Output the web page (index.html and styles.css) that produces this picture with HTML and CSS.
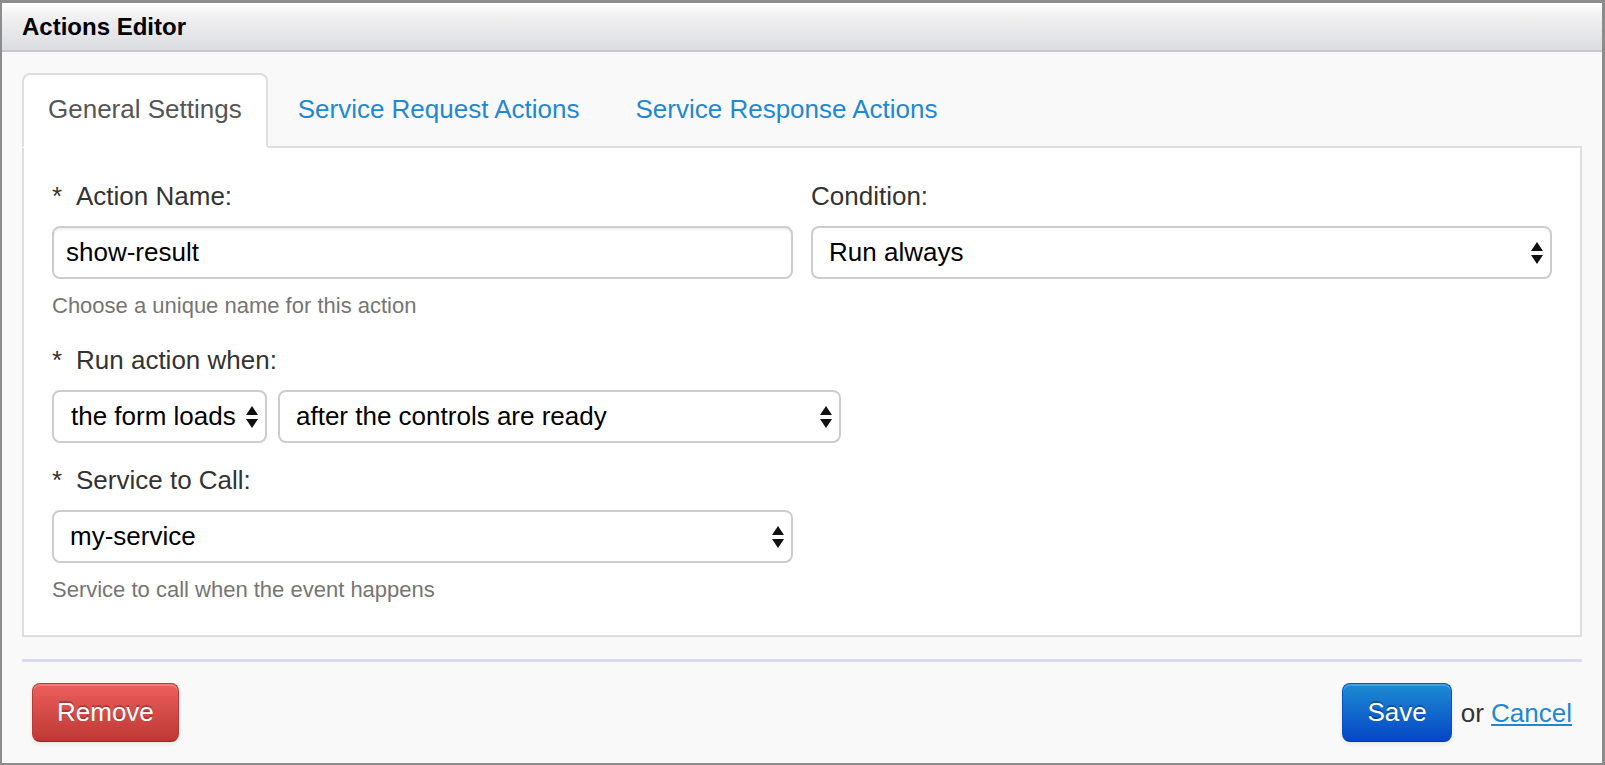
FILE: index.html
```html
<!DOCTYPE html>
<html lang="en">
<head>
<meta charset="utf-8">
<title>Actions Editor</title>
<link rel="stylesheet" href="styles.css">
</head>
<body>
<div class="window">
  <header class="titlebar">
    <h1 class="title">Actions Editor</h1>
  </header>
  <main class="content">
    <nav class="tabs">
      <a class="tab active">General Settings</a>
      <a class="tab">Service Request Actions</a>
      <a class="tab">Service Response Actions</a>
    </nav>
    <section class="panel">
      <div class="row-two">
        <div class="field">
          <label class="label"><span class="req">*</span>Action Name:</label>
          <input class="input" type="text" value="show-result">
          <p class="help">Choose a unique name for this action</p>
        </div>
        <div class="field">
          <label class="label">Condition:</label>
          <div class="select select-full">
            <span>Run always</span>
            <svg class="arrows" width="12" height="22" viewBox="0 0 12 22"><polygon points="6,0 12,9 0,9"/><polygon points="0,13 12,13 6,22"/></svg>
          </div>
        </div>
      </div>
      <div class="field field-when">
        <label class="label"><span class="req">*</span>Run action when:</label>
        <div class="select-row">
          <div class="select select-event">
            <span>the form loads</span>
            <svg class="arrows" width="12" height="22" viewBox="0 0 12 22"><polygon points="6,0 12,9 0,9"/><polygon points="0,13 12,13 6,22"/></svg>
          </div>
          <div class="select select-timing">
            <span>after the controls are ready</span>
            <svg class="arrows" width="12" height="22" viewBox="0 0 12 22"><polygon points="6,0 12,9 0,9"/><polygon points="0,13 12,13 6,22"/></svg>
          </div>
        </div>
      </div>
      <div class="field field-service">
        <label class="label"><span class="req">*</span>Service to Call:</label>
        <div class="select select-full">
          <span>my-service</span>
          <svg class="arrows" width="12" height="22" viewBox="0 0 12 22"><polygon points="6,0 12,9 0,9"/><polygon points="0,13 12,13 6,22"/></svg>
        </div>
        <p class="help">Service to call when the event happens</p>
      </div>
    </section>
    <div class="divider"></div>
    <footer class="footer">
      <button class="btn btn-danger" type="button">Remove</button>
      <div class="actions">
        <button class="btn btn-primary" type="button">Save</button>
        <span class="alt">or <a class="link" href="#">Cancel</a></span>
      </div>
    </footer>
  </main>
</div>
</body>
</html>
```

FILE: styles.css
```css
* {
  box-sizing: border-box;
}

html, body {
  margin: 0;
  padding: 0;
}

body {
  font-family: "Liberation Sans", Arial, Helvetica, sans-serif;
  color: #333;
  background: #f9f9f9;
}

.window {
  width: 1605px;
  height: 765px;
  border-style: solid;
  border-color: #8c8c8c;
  border-width: 3px 3px 2px 2px;
  background: #f9f9f9;
  display: flex;
  flex-direction: column;
  overflow: hidden;
}

.titlebar {
  height: 49px;
  flex: none;
  display: flex;
  align-items: center;
  padding: 0 20px;
  background: linear-gradient(#fefefe, #f0f0f1 30%, #dcdde0);
  border-bottom: 2px solid #c9c9c9;
}

.title {
  margin: 0;
  font-size: 24px;
  font-weight: bold;
  color: #000;
  line-height: 30px;
}

.content {
  flex: 1;
  padding: 21px 20px 0;
}

.tabs {
  display: flex;
  gap: 4px;
  margin-bottom: -2px;
  position: relative;
  z-index: 1;
}

.tab {
  display: block;
  padding: 14px 24px 17px;
  line-height: 40px;
  font-size: 26px;
  color: #1f88d0;
  border: 2px solid transparent;
  border-radius: 8px 8px 0 0;
  cursor: pointer;
}

.tab.active {
  color: #555;
  background: #fff;
  border-color: #dedede #dedede #fff;
}

.panel {
  position: relative;
  background: #fff;
  border: 2px solid #dedede;
  padding: 28px 28px 30px;
}

.row-two {
  display: grid;
  grid-template-columns: 741px 741px;
  column-gap: 18px;
}

.label {
  display: block;
  font-size: 26px;
  line-height: 40px;
  color: #333;
  margin-bottom: 10px;
}

.req {
  display: inline-block;
  width: 24px;
}

.input {
  display: block;
  width: 741px;
  height: 53px;
  margin: 0;
  padding: 0 12px;
  border: 2px solid #cdcdcd;
  border-radius: 8px;
  font-family: inherit;
  font-size: 26px;
  color: #000;
  background: #fff;
  box-shadow: inset 0 2px 2px rgba(0, 0, 0, 0.06);
  outline: none;
}

.help {
  margin: 12px 0 0;
  font-size: 22px;
  line-height: 30px;
  color: #757575;
}

.select {
  display: flex;
  align-items: center;
  justify-content: space-between;
  height: 53px;
  padding: 0 7px 0 16px;
  border: 2px solid #cdcdcd;
  border-radius: 8px;
  background: #fff;
  font-size: 26px;
  color: #000;
  white-space: nowrap;
}

.arrows {
  flex: none;
  fill: #111;
}

.select-full {
  width: 741px;
}

.select-row {
  display: flex;
  gap: 11px;
}

.select-event {
  width: 215px;
  padding-left: 17px;
}

.select-timing {
  width: 563px;
}

.field-when {
  margin-top: 19px;
}

.field-service {
  margin-top: 17px;
}

.divider {
  height: 3px;
  margin-top: 22px;
  background: #dcdcee;
}

.footer {
  display: flex;
  justify-content: space-between;
  align-items: center;
  padding: 21px 10px 0;
}

.actions {
  display: flex;
  align-items: center;
  gap: 9px;
}

.btn {
  display: inline-flex;
  align-items: center;
  justify-content: center;
  height: 59px;
  padding: 0 24px;
  border: 1px solid;
  border-radius: 8px;
  font-family: inherit;
  font-size: 26px;
  color: #fff;
  text-shadow: 0 -2px 0 rgba(0, 0, 0, 0.25);
  box-shadow: inset 0 2px 0 rgba(255, 255, 255, 0.2), 0 2px 4px rgba(0, 0, 0, 0.08);
  cursor: pointer;
}

.btn-danger {
  background: linear-gradient(#ec5f5c, #bd3834);
  border-color: #bd3834 #bd3834 #8f2824;
}

.btn-primary {
  background: linear-gradient(#1c8bd2, #0646c6);
  border-color: #0a50c8 #0a50c8 #063a96;
}

.alt {
  font-size: 26px;
  line-height: 30px;
  color: #333;
}

.link {
  color: #1f88d0;
  text-decoration: underline;
}
```
